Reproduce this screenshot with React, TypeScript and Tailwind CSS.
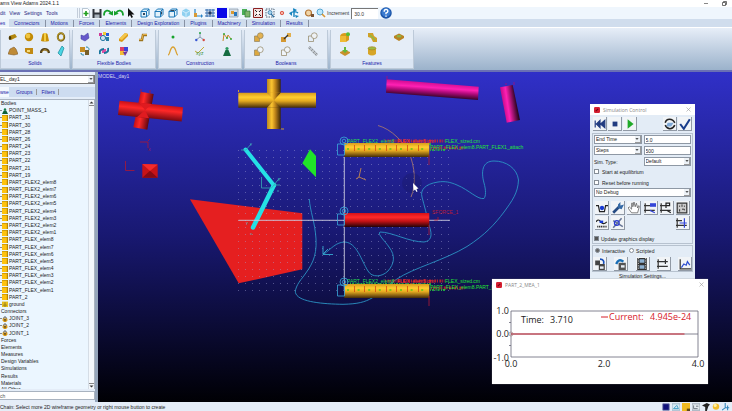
import type { ReactNode } from 'react'

type IconItem = { name: string; art: ReactNode }

function Art({ children, className = 'h-[10px] w-[10px]' }: { children: ReactNode; className?: string }) {
  return (
    <svg viewBox="0 0 10 10" className={className} fill="none" aria-hidden="true">
      {children}
    </svg>
  )
}

// Toolbar drawings
const cube = (front: string) => (
  <>
    <path d="M1 3.5 3.5 1H9v5.5L6.5 9H1z" fill="#e3f2fb" />
    <path d="M1 3.5h5.5V9H1zM1 3.5 3.5 1H9L6.5 3.5M9 1v5.5L6.5 9" stroke="#1d78b8" strokeWidth="1" />
    <path d={front} fill="#35495e" />
  </>
)

const fileTools: IconItem[] = [
  { name: 'New', art: <><path d="M1.5.5h5l2 2v7h-7z" fill="#fff" stroke="#8da3b5" strokeWidth=".6" /><path d="M5 3v5M2.500 5.500h5" stroke="#22a022" strokeWidth="1.700" /></> },
  { name: 'Save', art: <><path d="M.5 1h9v9h-9z" fill="#30353c" /><path d="M2.5 1h5v3.5h-5z" fill="#eef2f6" /><path d="M2.5 6.5h5V10h-5z" fill="#aab4bd" /></> },
  { name: 'Redo', art: <><path d="M1 7.5C1 1.5 6 1.5 8 5" stroke="#16a02c" strokeWidth="1.800" /><path d="M5.3 5.8 10 7.5V2.8z" fill="#16a02c" /></> },
  { name: 'Undo', art: <><path d="M9 7.5C9 1.5 4 1.5 2 5" stroke="#16a02c" strokeWidth="1.800" /><path d="M4.7 5.8 0 7.5V2.8z" fill="#16a02c" /></> },
]

const viewTools: IconItem[] = [
  { name: 'Front view', art: cube('M3 5h2v2H3z') },
  { name: 'Side view', art: cube('M7 4l1-1v3L7 7z') },
  { name: 'Top view', art: cube('M3 2h4L6 3H2z') },
]

const sceneTools: IconItem[] = [
  { name: 'Isometric view', art: <><path d="M5 .5 9 2.7v4.6L5 9.5 1 7.3V2.7z" fill="#8fd0f0" /><path d="M1 2.7 5 5l4-2.3M5 5v4.5" stroke="#e8f7ff" strokeWidth=".7" /></> },
  { name: 'Coordinate frame', art: <><path d="M2 1v7h7" stroke="#2a83c6" strokeWidth="1.2" /><path d="M1 5h3v4H1z" fill="#d89a35" /><path d="m8 6 2 2-2 2z" fill="#2a83c6" /></> },
  { name: 'Grid', art: <><path d="M0 2h10M0 5h10M0 8h10M2 1v8M5 1v8M8 1v8" stroke="#376eaf" strokeWidth="1" /><path d="M3.5 3.5h3v3h-3z" fill="#263f63" /></> },
  { name: 'Background', art: <path d="M0 0h10v10H0z" fill="#0808e8" /> },
  { name: 'Icons', art: <><path d="M0 1h9v8H0z" fill="#d5dfe8" stroke="#8191a1" strokeWidth=".7" /><path d="M2 3h3v3H2z" fill="#db9a31" /><path d="M5 4h3v4H5z" fill="#2878bd" /></> },
  { name: 'Shaded', art: <><path d="M1 1h5v6H1z" fill="#4caf58" /><path d="M4 3h5v6H4z" fill="#7fb66c" stroke="#31763b" strokeWidth=".7" /></> },
  { name: 'Fit', art: <><path d="M.5.5h9v9h-9z" fill="#f4dede" stroke="#8d2020" strokeWidth="1" /><path d="m2 2 6 6m0-6L2 8" stroke="#222" strokeWidth="1" /><path d="M4 4h2v2H4z" fill="#fff" /></> },
  { name: 'Zoom box', art: <><path d="M1 1h8v8H1z" stroke="#526477" strokeWidth="1" strokeDasharray="1.5 1" /><circle cx="5" cy="4.5" r="2" fill="#a6d4ee" stroke="#276b9d" strokeWidth=".7" /><path d="m6 6 3 3" stroke="#276b9d" strokeWidth="1.2" /></> },
  { name: 'Center', art: <circle cx="5" cy="5" r="1.7" fill="#f5b1a5" stroke="#d84d3c" strokeWidth=".9" /> },
  { name: 'Rotate', art: <><path d="M5 1v8M1 6c2-3 6-3 8-1" stroke="#1683bd" strokeWidth="1.4" /><path d="m4 0 4 2-3 2zM0 5l3-1v4zM6 7l4 1-3 2z" fill="#1683bd" /></> },
]

const endTools: IconItem[] = [
  { name: 'Rotate tool', art: <><circle cx="4.5" cy="5" r="3" fill="#f1d5a8" stroke="#b57736" strokeWidth="1.2" /><path d="M7 6h3v3H7z" fill="#795131" /></> },
  { name: 'Zoom', art: <><circle cx="4" cy="4" r="3" fill="#bce6fb" stroke="#4c9fcc" strokeWidth=".9" /><path d="m6 6 3 3" stroke="#d99632" strokeWidth="1.6" /></> },
]

// Ribbon drawings
const gears = <><circle cx="4" cy="6" r="2.6" fill="#cce1ef" stroke="#23749f" strokeWidth="1" /><path d="M4 0h3v3H4z" fill="#f3cb37" /><path d="M7 1h3v3H7z" fill="#2859da" /><path d="M0 1h3v3H0z" fill="#d13a98" /><path d="M7 5h3v4H7z" fill="#277da4" /></>
const boolean = (a: string, b: string) => <><path d="M.5 4h5v5.5h-5z" fill={a} stroke="#8f8260" strokeWidth=".7" /><circle cx="6.3" cy="3.7" r="2.9" fill={b} stroke="#8f8260" strokeWidth=".7" /></>

const ribbon: { title: string; className: string; grid: string; icons: IconItem[] }[] = [
  {
    title: 'Solids',
    className: 'w-[70px]',
    grid: 'grid-cols-4 pl-1',
    icons: [
      { name: 'Cylinder', art: <><path d="m1 4 6-2 2 3-6 3z" fill="#b1860d" /><ellipse cx="2" cy="6" rx="1.3" ry="2" fill="#4c3904" /></> },
      { name: 'Sphere', art: <><circle cx="5" cy="5" r="4.2" fill="#c28b06" /><circle cx="4" cy="4" r="2.4" fill="#efc440" /></> },
      { name: 'Frustum', art: <><path d="M1 9 2.5 2Q5 0 7.5 2L9 9Q5 10 1 9" fill="#c89008" /><path d="M4 1h2v8H4z" fill="#f4ce43" /></> },
      { name: 'Torus', art: <><ellipse cx="5" cy="5" rx="3.2" ry="3.7" stroke="#776116" strokeWidth="2" /><ellipse cx="4.6" cy="4.6" rx="3.2" ry="3.7" stroke="#d8b331" strokeWidth=".7" /></> },
      { name: 'Extrusion', art: <path d="m0 8 2-5 4-2 2 2 2 5-4 1z" fill="#bf8b37" stroke="#775120" strokeWidth=".5" /> },
      { name: 'Revolution', art: <><path d="M1 2h8v6H5L1 6z" fill="#c18a14" /><path d="M3 4h3v2H3z" fill="#f5dc7b" /></> },
      { name: 'Arc', art: <><path d="M1 7C1 2 8 2 9 7" stroke="#51401b" strokeWidth="2.3" /><path d="M2 6c1-3 5-3 6 0" stroke="#d7a225" strokeWidth=".8" /></> },
      { name: 'Plane', art: <path d="m6 0 2 2-3 8-3-3z" fill="#4bd6e4" stroke="#178798" strokeWidth=".7" /> },
    ],
  },
  {
    title: 'Flexible Bodies',
    className: 'w-[84px]',
    grid: 'grid-cols-4 px-[2px]',
    icons: [
      { name: 'Adams Flex', art: <path d="M1 3 4 4l4-3 1 5-4 3-4-2z" fill="#6658cb" stroke="#3b389a" strokeWidth=".5" /> },
      { name: 'Rigid to flex', art: gears },
      { name: 'Discrete link', art: <><path d="m0 7 6-6 3 1v2L3 10 0 9z" fill="#d99712" /><path d="m0 7 6-6 3 1-6 6z" fill="#f4c64a" /></> },
      { name: 'FE part', art: <><path d="M1 8h3l1-5h4" stroke="#9d741b" strokeWidth="2.5" /><path d="M1 7.5h3l1-5h4" stroke="#e4b04d" strokeWidth="1" /></> },
      { name: 'Flex to rigid', art: <><path d="M0 1h5v5H0z" fill="#c58d24" /><path d="M5 4h4v5H5z" fill="#765f2a" /><path d="M6 1c3 0 3 2 3 3M1 7c0 2 2 2 3 2" stroke="#187f9b" /></> },
      { name: 'Flex swap', art: <><path d="M3 3h4v4H3z" fill="#dd50a4" /><path d="M1 8c-1-3 1-5 4-5M9 2c1 3-1 5-4 5" stroke="#1a759c" strokeWidth="2" /></> },
      { name: 'ViewFlex', art: <><path d="M1 1h4v4H1z" fill="#da3f68" /><path d="M5 1h4v4H5z" fill="#3944d9" /><path d="M1 5h4v4H1z" fill="#f2bd36" /><path d="m4 6 5-1-3 5z" fill="#70359b" /></> },
    ],
  },
  {
    title: 'Construction',
    className: 'w-[84px]',
    grid: 'grid-cols-3 px-[1px]',
    icons: [
      { name: 'Point', art: <circle cx="5" cy="5" r="1.5" fill="#18a32e" /> },
      { name: 'Marker', art: <><path d="M5 1v4L1 8m4-3 4 3" stroke="#7188a3" strokeWidth=".8" /><circle cx="5" cy="1" r="1" fill="#24a444" /><circle cx="1.3" cy="8" r="1.2" fill="#3957d3" /><circle cx="8.7" cy="8" r="1.2" fill="#d34a42" /></> },
      { name: 'Polyline', art: <><path d="m1 9 1-7 3 4 1-3 3 4" stroke="#c98927" /><circle cx="2" cy="2" r="1" fill="#35a938" /><circle cx="5" cy="6" r="1" fill="#35a938" /><circle cx="9" cy="7" r="1" fill="#35a938" /></> },
      { name: 'Spline', art: <path d="M0 9C2 9 2 1 5 1s3 8 5 8" stroke="#daa233" strokeWidth="1.3" /> },
      { name: 'Equation', art: <><path d="m0 5 3 2 6-6" stroke="#c1ac37" /><text x="1" y="9" fontSize="5" fill="#389144">xyz</text></> },
      { name: 'Point mass', art: <><path d="M3.500 4h3L9 10H1z" fill="#176c41" /><circle cx="5" cy="2.500" r="1.600" fill="#2d9a61" /></> },
    ],
  },
  {
    title: 'Booleans',
    className: 'w-[84px]',
    grid: 'grid-cols-3 px-[1px]',
    icons: [
      { name: 'Union', art: boolean('#dda83f', '#e3b252') },
      { name: 'Merge', art: <><path d="M0 5h5v5H0z" fill="#d49832" /><path d="M6 1h4v4H6z" fill="#e2af4d" /><path d="m3 7 4-4" stroke="#333" strokeWidth="1.3" /></> },
      { name: 'Intersect', art: boolean('none', '#eef1f4') },
      { name: 'Cut', art: boolean('#dda83f', '#eff4fa') },
      { name: 'Split', art: boolean('#eff4fa', '#eff4fa') },
      { name: 'Chain', art: <><path d="m1 1 8 8" stroke="#8f9499" strokeWidth="2.5" strokeDasharray="2.5 .5" /><path d="m1 1 8 8" stroke="#d8dcdf" strokeWidth=".7" /></> },
    ],
  },
  {
    title: 'Features',
    className: 'w-[84px]',
    grid: 'grid-cols-3 px-[1px]',
    icons: [
      { name: 'Fillet', art: <><path d="M0 4Q1 1 5 1l4 1v6l-3 2H0z" fill="#d99c1b" /><path d="M0 4h6v6H0z" fill="#efbb36" /><circle cx="8" cy="2.3" r="2" fill="#59bd37" /></> },
      { name: 'Chamfer', art: <><path d="M1 1h5l1 3 3 2v4H6L4 6 1 5z" fill="#d0a128" /><path d="m3 3 5 5" stroke="#8fba45" strokeWidth="1.5" /></> },
      { name: 'Hole', art: <><path d="m0 4 5-2.5L10 4v2L5 9 0 6z" fill="#b98321" /><ellipse cx="5" cy="4.3" rx="2.5" ry="1.3" fill="#8cb448" /></> },
      { name: 'Boss', art: <><path d="m0 6 5-2 5 2v1L5 10 0 7z" fill="#c8912b" /><path d="M4 1h2v3h2L5 7 2 4h2z" fill="#64b83c" /></> },
      { name: 'Shell', art: <><path d="M1 2v6q4 3 8 0V2z" fill="#d7a527" /><ellipse cx="5" cy="2.3" rx="4" ry="1.6" fill="#9dbb42" stroke="#a77d1e" strokeWidth=".6" /></> },
    ],
  },
]

const menus = ['dit', 'View', 'Settings', 'Tools']
const ribbonTabs = ['Connectors', 'Motions', 'Forces', 'Elements', 'Design Exploration', 'Plugins', 'Machinery', 'Simulation', 'Results']

const elems = [8, 7, 6, 5, 4, 3, 2, 1]
const tree: { label: string; kind: 'group' | 'mass' | 'part' | 'ground' | 'joint' }[] = [
  { label: 'Bodies', kind: 'group' },
  { label: 'POINT_MASS_1', kind: 'mass' },
  ...[31, 30, 28, 26, 24, 23, 22, 21, 19].map((n) => ({ label: `PART_${n}`, kind: 'part' as const })),
  ...elems.map((n) => ({ label: `PART_FLEX2_elem${n}`, kind: 'part' as const })),
  ...elems.map((n) => ({ label: `PART_FLEX_elem${n}`, kind: 'part' as const })),
  { label: 'PART_2', kind: 'part' },
  { label: 'ground', kind: 'ground' },
  { label: 'Connectors', kind: 'group' },
  ...[3, 2, 1].map((n) => ({ label: `JOINT_${n}`, kind: 'joint' as const })),
  ...['Forces', 'Elements', 'Measures', 'Design Variables', 'Simulations', 'Results', 'Materials'].map((label) => ({ label, kind: 'group' as const })),
]

const treeArt = {
  group: null,
  mass: <><path d="M3 4h4l3 6H0z" fill="#0d6039" /><circle cx="5" cy="2.5" r="2" fill="#167c4b" /></>,
  part: <><path d="M0 0h10v10H0z" fill="#b78605" /><path d="M0 1h8v9H0z" fill="#ffc20e" /></>,
  ground: <><path d="M0 1h10v9H0z" fill="#e7be1c" /><path d="M5 2v5M2 7h6M4 9h2" stroke="#655c22" /></>,
  joint: <><path d="M3 5V2.5Q5 0 7 2.500V5" stroke="#474747" strokeWidth="1.600" /><path d="M1 4h8v3L7 10H3L1 7z" fill="#d99a14" /><path d="M4 5h2v3H4z" fill="#333" /></>,
}

function ToolButtons({ items, className }: { items: IconItem[]; className: string }) {
  return (
    <div className={`flex items-center ${className}`}>
      {items.map((item) => (
        <button key={item.name} aria-label={item.name} className="flex w-[11px] justify-center">
          <Art>{item.art}</Art>
        </button>
      ))}
    </div>
  )
}

function Header() {
  return (
    <header className="shrink-0">
      <div className="flex h-[7px] items-center justify-between bg-white leading-none text-[#222]">
        <span>ams View Adams 2024.1.1</span>
        <div className="flex items-center gap-[14px] pr-[5px]">
          <button aria-label="Minimize" className="h-px w-1 bg-[#888]" />
          <button aria-label="Restore" className="flex">
            <Art className="h-[5px] w-[5px]"><path d="M1 3h6v6H1zM3 3V1h6v6H7" stroke="#444" strokeWidth="1.5" /></Art>
          </button>
        </div>
      </div>

      <div className="flex h-3 items-center bg-[#eff6fd]">
        <nav className="flex w-[77px] gap-[4px] text-[#252480]">
          {menus.map((m) => <button key={m}>{m}</button>)}
        </nav>
        <div className="h-[10px] w-[3px] border-r border-l border-[#c3cdda]" />
        <ToolButtons items={fileTools} className="" />
        <button aria-label="Select" className="ml-px flex w-[11px] justify-center">
          <Art><path d="M2 0v9l2-2 1.5 3L7 9 5.5 6.500H8.500z" fill="#111" /></Art>
        </button>
        <ToolButtons items={viewTools} className="ml-[3px] gap-[3px]" />
        <ToolButtons items={sceneTools} className="ml-[2px] gap-px" />
        <ToolButtons items={endTools} className="ml-[4px] gap-px" />
        <label htmlFor="increment" className="ml-px text-[#333]">Increment</label>
        <input id="increment" defaultValue="30.0" className="ml-[2px] h-[11px] w-[27px] border-t border-l border-[#777] bg-white pl-[2px] text-[#333]" />
        <button aria-label="Help" className="ml-[2px] flex">
          <Art className="h-3 w-3">
            <circle cx="5" cy="5" r="4.8" fill="#1c55a8" />
            <circle cx="5" cy="4.5" r="3.7" fill="#3a7bd0" />
            <path d="M3.5 4Q3.500 2 5 2t1.500 1.700Q6.500 4.500 5 5v1M5 7v1.200" stroke="#fff" strokeWidth="1.2" />
          </Art>
        </button>
      </div>

      <nav className="flex h-2 items-center bg-[#d0dded] text-[#1a1aa8]">
        <button className="h-full w-[9px] bg-[#edf4fb] text-left">es</button>
        {ribbonTabs.map((tab) => (
          <button key={tab} className="h-[7px] border-r border-[#8791a3] px-[5px] whitespace-nowrap">{tab}</button>
        ))}
      </nav>

      <div className="flex h-[43px] gap-[2px] border-t border-white bg-linear-to-b from-[#e7eef8] to-[#9bb2cb] pt-[2px] pb-px">
        {ribbon.map((group) => (
          <section key={group.title} className={`flex shrink-0 flex-col border-r border-b border-l border-[#bdcad9] bg-[#e5edf7] ${group.className}`}>
            <div className={`grid h-[28px] grid-rows-2 items-center justify-items-center ${group.grid}`}>
              {group.icons.map((icon) => (
                <button key={icon.name} aria-label={icon.name}><Art>{icon.art}</Art></button>
              ))}
            </div>
            <h2 className="mt-px flex-1 bg-[#dbe6f4] text-center leading-[9px] text-[#1a1aa8]">{group.title}</h2>
          </section>
        ))}
      </div>
    </header>
  )
}

function DownArrow() {
  return (
    <span className="pointer-events-none absolute top-0 right-0 bottom-0 flex w-[6px] items-center justify-center border-r border-b border-[#999] bg-[#edf2f7]">
      <Art className="h-[4px] w-[4px]"><path d="m1 3 4 4 4-4z" fill="#222" /></Art>
    </span>
  )
}

function Browser() {
  return (
    <aside className="flex w-[98px] shrink-0 flex-col border-r-[3px] border-[#95a5ba] bg-[#e4edf8] pt-[3px] pb-[2px] text-[#222]">
      <div className="relative flex h-[9px] border border-l-0 border-[#777] bg-white">
        <select aria-label="Model" className="w-full appearance-none text-[5px] leading-none">
          <option>EL_day1</option>
        </select>
        <DownArrow />
      </div>
      <nav className="mt-[3px] flex h-[10px] items-center bg-[#cddcf0] text-[#1a1aa8]">
        <button className="h-full w-[9px] bg-[#f3f8fd] text-left">wse</button>
        <button className="border-r border-[#999] pr-[4px] pl-[7px]">Groups</button>
        <button className="border-r border-[#999] pr-[3px] pl-[4px]">Filters</button>
      </nav>
      <div className="mt-[2px] flex min-h-0 flex-1 border-t border-r border-[#aab4c0] bg-[#ebf6ff]">
        <ul className="flex min-w-0 flex-1 flex-col">
          {tree.map((node) => (
            <li key={node.label + node.kind} className="flex min-h-0 flex-1 items-center leading-none">
              {node.kind !== 'group' && (
                <>
                  <span className="h-px w-[2px] bg-[#888]" />
                  <Art className="mr-px h-[6px] w-[6px]">{treeArt[node.kind]}</Art>
                </>
              )}
              <span className={node.kind === 'group' ? 'pl-px' : ''}>{node.label}</span>
            </li>
          ))}
          <li className="h-[2px] overflow-hidden pl-px leading-[5px]">All Other</li>
        </ul>
        <div className="flex w-[6px] flex-col justify-between border-l border-[#d5dde6] bg-[#f4f8fc]">
          <button aria-label="Scroll up" className="border-b border-[#888]"><Art className="h-[5px] w-[5px]"><path d="m1 7 4-4 4 4z" fill="#333" /></Art></button>
          <button aria-label="Scroll down" className="border-t border-[#888]"><Art className="h-[5px] w-[5px]"><path d="m1 3 4 4 4-4z" fill="#333" /></Art></button>
        </div>
      </div>
      <input aria-label="Search" placeholder="ch" className="mt-[2px] h-[9px] w-full border border-l-0 border-[#a9b3c0] bg-white placeholder:text-[#555]" />
    </aside>
  )
}

// Names along a flexible beam; the dashed runs are the ones packed too tightly to read
function BeamNames({ y }: { y: number }) {
  return (
    <g fontSize="5">
      <path d={`M385 ${y - 2}h60M431 ${y + 5}h34`} stroke="#e02525" strokeWidth="3" strokeDasharray="1 1.400 2 .8" opacity=".75" />
      <path d={`M350 ${y + 1}h82M430 ${y + 7}h16`} stroke="#22c83a" strokeWidth="2" strokeDasharray="1 1 2 1.500" opacity=".8" />
      <text x="347" y={y} fill="#24d850">PART_FLEX2_elem8</text>
      <text x="397" y={y} fill="#f03030">FLEX_elem5.cm</text>
      <text x="445" y={y} fill="#22e336">FLEX_sized.cm</text>
      <text x="430" y={y + 6} fill="#22e336">PART_FLEX_elem8.PART_FLEX1_attach</text>
    </g>
  )
}

function JointMark({ y }: { y: number }) {
  return (
    <g stroke="#38a8dc" strokeWidth=".8" fill="none">
      <circle cx="344" cy={y - 2} r="4" />
      <circle cx="344" cy={y - 2} r="1.800" />
      <path d={`M337.5 ${y + 1}h7v11h-7z`} />
    </g>
  )
}

function Beam({ y, fill, flexible }: { y: number; fill: string; flexible?: boolean }) {
  return (
    <g>
      <path d={`M344.3 ${y}h85v14h-85z`} fill={fill} />
      {flexible && [354, 364, 375, 386, 396, 407, 418].map((x) => (
        <path key={x} d={`M${x}.5 ${y + 2}v6`} stroke="#d54a12" strokeWidth=".8" />
      ))}
      {flexible && <path d={`M347 ${y + 6}h80`} stroke="#7dc51b" strokeWidth="2" strokeDasharray="2 8.600" />}
      <path d={`M429 ${y + 12}v10`} stroke="#b61a35" strokeWidth=".8" />
    </g>
  )
}

function Scene() {
  return (
    <svg viewBox="98 72 634 330" preserveAspectRatio="xMinYMin slice" className="block h-full w-full" fontFamily="Liberation Sans, sans-serif">
      <defs>
        <linearGradient id="sky" x2="0" y2="1"><stop stopColor="#3030c8" /><stop offset=".5" stopColor="#181870" /><stop offset="1" stopColor="#000004" /></linearGradient>
        <linearGradient id="goldY" x2="0" y2="1"><stop stopColor="#d69a1c" /><stop offset=".3" stopColor="#ffce30" /><stop offset=".55" stopColor="#e5aa20" /><stop offset="1" stopColor="#442b08" /></linearGradient>
        <linearGradient id="goldX"><stop stopColor="#b98620" /><stop offset=".35" stopColor="#fcc530" /><stop offset=".6" stopColor="#c0851a" /><stop offset="1" stopColor="#382408" /></linearGradient>
        <linearGradient id="redY" x2="0" y2="1"><stop stopColor="#d51018" /><stop offset=".3" stopColor="#ff2a2a" /><stop offset=".6" stopColor="#c01115" /><stop offset="1" stopColor="#210308" /></linearGradient>
        <linearGradient id="redLong" gradientUnits="userSpaceOnUse" x1="151" y1="104" x2="149.5" y2="119"><stop stopColor="#c81118" /><stop offset=".35" stopColor="#ff2828" /><stop offset="1" stopColor="#6e0710" /></linearGradient>
        <linearGradient id="redShort" gradientUnits="userSpaceOnUse" x1="137" y1="110" x2="150.5" y2="112.5"><stop stopColor="#c81118" /><stop offset=".35" stopColor="#ff2828" /><stop offset="1" stopColor="#5e0710" /></linearGradient>
        <linearGradient id="pinkLong" gradientUnits="userSpaceOnUse" x1="433" y1="82.5" x2="432" y2="97"><stop stopColor="#d10c91" /><stop offset=".35" stopColor="#ff20b4" /><stop offset=".6" stopColor="#b30b7d" /><stop offset="1" stopColor="#320424" /></linearGradient>
        <linearGradient id="pinkShort" gradientUnits="userSpaceOnUse" x1="503" y1="105" x2="516.5" y2="103"><stop stopColor="#c70c8a" /><stop offset=".35" stopColor="#ff20b4" /><stop offset="1" stopColor="#2b041f" /></linearGradient>
        <pattern id="dots" x="238" y="150" width="7" height="7" patternUnits="userSpaceOnUse"><path d="M0 0h1v1H0z" fill="#a4a4d6" opacity=".45" /></pattern>
      </defs>
      <path d="M98 72h634v330H98z" fill="url(#sky)" />
      <text x="98" y="78" fontSize="5" fill="#d8d8ef">MODEL_day1</text>

      <path d="m190 199.3 112.3 14v56l-63.6 14z" fill="#e51f20" />
      <path d="M238 150h214v142H238z" fill="url(#dots)" />

      {/* cross shaped bodies */}
      <path d="m140.7 91.7 13 2.3-6.4 35.700-14-2.400z" fill="url(#redShort)" />
      <path d="m119.5 100.7 63.5 6.600-1.300 14.200-63.700-6.500z" fill="url(#redLong)" />
      <path d="m139.4 102.8 5.700 7.500 6.700-6.200M137 117l8-6.700 4 8" fill="#df1b20" />
      <path d="M267 79h13.7v50H267z" fill="url(#goldX)" />
      <path d="M238.3 92.7H316v15h-77.700z" fill="url(#goldY)" />
      <path d="M267 92.7h13.700l-6.700 7.500zM267 107.700l7-7.500 6.700 7.500z" fill="url(#goldX)" />
      <path d="M238.5 92v-2M281 129h3" stroke="#cf9c2d" />
      <path d="m142.3 164 15.400.5v13.200h-15.400z" fill="#c71318" />
      <path d="m142.3 164 7.700 7 7.700-6.500z" fill="#f42b2b" />
      <path d="m142.3 177.700 7.700-7 7.700 7z" fill="#870a14" />
      <path d="M125.5 161v9.500h9M140 142h8v6M148 141l2-2M141 89v3M150 90v3" stroke="#ad1733" fill="none" strokeWidth=".8" />
      <text x="148" y="151" fontSize="4" fill="#ad1733">X</text>

      {/* links and plates */}
      <path d="m245.5 149.5 28.500 36" stroke="#25e0e5" strokeWidth="4" strokeLinecap="round" />
      <path d="m274 185-21 42.500" stroke="#25e0e5" strokeWidth="4.5" strokeLinecap="round" />
      <path d="M241 150h5l5-6M261.5 177v11h10l8-10M274 185h6" stroke="#36a9b5" fill="none" strokeWidth=".8" />
      <g fontSize="4" fill="#4bb8c0"><text x="250" y="145">y</text><text x="278" y="180">y</text><text x="277" y="192">x</text><text x="246" y="224">y</text><text x="250" y="235">x</text></g>
      <path d="m310 149.3 6 6.700v21.300l-13.700-14z" fill="#20e329" />

      {/* curves */}
      <g fill="none" strokeWidth=".9">
        <path d="M309.3 199C310 211 315 222 316 239C317 258 311 266 303 277C297 284 294 291 296 294C300 302 323 304 343 304.3C358 304 365 302 372 298C384 291 387 285 397 279C413 268 445 260 467 246.5C485 235 495 224 504 212C512 201 518 193 518.5 180C517 168 506 161 494 161C482 161 481 172 484 183C486 190 486 196 484 198.5C478 200 469 190 457 185C450 182 445 181 438 182C425 184 420 190 422 197C424 205 427 215 429 225C433 236 431 241 424 242C409 242 392 232 380 232C377 234 385 241 389 247C396 256 394 264 388 271C382 277 372 278 368 271C361 260 357 243 345 242C336 242 331 249 324 254" stroke="#2b93c4" />
        <path d="M323 246v8.500h10M323 254l5-5" stroke="#36a9d2" />
        <path d="M378 125.5C391 129 405 142 411 158C416 174 415 187 411 197" stroke="#a07472" />
        <path d="m361 168-2 9 7 3M359 177l-3 2" stroke="#c4874d" />
      </g>

      <circle cx="412" cy="183" r="10" fill="#17175e" opacity=".3" />
      <path d="M344.3 157v133M238.5 220.3H450" stroke="#ccccdf" strokeWidth=".9" />

      <path d="M386.7 79.3 478.7 86.7 478 100 386 92.7z" fill="url(#pinkLong)" />
      <path d="m500 87.3 12.7-2.300 7.300 35-13.300 2.700z" fill="url(#pinkShort)" />
      <path d="M387 76v4M506 83v2M514 82v3" stroke="#a80d7c" strokeWidth=".8" />

      <BeamNames y={143} />
      <Beam y={143} fill="url(#goldY)" flexible />
      <JointMark y={143} />
      <Beam y={213} fill="url(#redY)" />
      <JointMark y={213} />
      <text x="432" y="214" fontSize="5" fill="#b61a35">SFORCE_1</text>
      <path d="M434 220h4v-3" stroke="#b61a35" fill="none" strokeWidth=".8" />
      <BeamNames y={283} />
      <Beam y={284} fill="url(#goldY)" flexible />
      <JointMark y={284} />
      <path d="m413 183 .5 8 1.500-1.500 1.500 2.500 1-.5-1-2.500 2-.5z" fill="#fff" />
    </svg>
  )
}

const driveButtons: IconItem[] = [
  { name: 'Reset', art: <><path d="M1 2v6M5 2v6L2 5zM9 2v6L5.500 5z" fill="#223c80" stroke="#223c80" /></> },
  { name: 'Stop', art: <path d="M3 3h4v4H3z" fill="#223c80" /> },
  { name: 'Run', art: <path d="m3 1 5 4-5 4z" fill="#20aa28" /> },
]
const checkButtons: IconItem[] = [
  { name: 'Static equilibrium', art: <><path d="M1 4c1-4 6-4 8 0M9 6c-2 4-6 4-8 0" stroke="#222" strokeWidth="1.3" /><path d="M3 4h5L6 7H2z" fill="#80a9d5" /></> },
  { name: 'Verify', art: <path d="m1 5 3 4 5-8" stroke="#193d8b" strokeWidth="1.7" /> },
]
const axes = <path d="M1 1v8M0 3h5M0 7h9" stroke="#333" strokeWidth="1" />
const modelButtons: IconItem[] = [
  { name: 'Equilibrium', art: <><path d="M0 3h2l1 5h4l1-5h2" stroke="#222" /><circle cx="5" cy="5" r="1.8" fill="#1639d3" /></> },
  { name: 'Settings', art: <><path d="m1 9 5-5" stroke="#254b83" strokeWidth="2.2" /><path d="M5 5V2l2-2v3l3-1-2 4z" fill="#3469a5" /></> },
  { name: 'Pan', art: <path d="M3 9 0 5l1-1 2 2V1h1v3l1-4 1 4 1-3 1 4 1-2 .5.5L8 9z" fill="#fff" stroke="#555" strokeWidth=".6" /> },
  { name: 'Linear', art: <>{axes}<path d="M5 1h5v3H5z" fill="#3546d8" /><path d="M5 7l4 2" stroke="#3546d8" /></> },
  { name: 'Plot', art: <>{axes}<path d="M5 5V1h3v2H5M6 7l3 2" stroke="#222" /></> },
  { name: 'Matrix', art: <><path d="M1 1h8v8H1z" fill="#ccc" stroke="#333" /><path d="M3 3v1M5 2v2M7 3v1M3 6v2M5 6h2v1" stroke="#333" strokeWidth=".8" /></> },
  { name: 'Modes', art: <><path d="M0 4q2-3 4 0t5 0" stroke="#222" /><path d="M3 3h3v2H3z" fill="#1639d3" /><path d="M1 8h8" stroke="#333" strokeWidth="1.5" strokeDasharray="1 .5" /></> },
  { name: 'Vibration', art: <><path d="m1 9 7-8M1 3l8 5" stroke="#687797" strokeWidth="1.3" /><circle cx="4" cy="5" r="2" stroke="#293bd3" /></> },
]
const traceButton: IconItem = { name: 'Trace', art: <>{axes}<path d="M3 5h6M7 1v8" stroke="#3546d8" /></> }
const postButtons: IconItem[] = [
  { name: 'Save simulation', art: <><path d="M1 2h4v4H1zM4 5h5v5H4z" fill="#444" /><path d="M5 1q4 0 3 4" stroke="#174fba" strokeWidth="1.4" /><path d="M5 7h3v2H5z" fill="#e7eef5" /></> },
  { name: 'Reload simulation', art: <><path d="M3 4h6v6H3z" fill="#555" /><path d="M1 5q2-5 6-2" stroke="#196eb6" strokeWidth="2" /><path d="M5 6h3v2H5z" fill="#e7eef5" /></> },
  { name: 'Animation', art: <><path d="M1 0h8v10H1z" fill="#333" /><path d="M3 1h4v3H3zM3 6h4v3H3z" fill="#8db1d2" /><path d="M2 0v10M8 0v10" stroke="#ddd" strokeWidth=".7" strokeDasharray="1 1" /></> },
  { name: 'Results', art: <>{axes}<path d="M5 3h4M7 1v4" stroke="#333" /></> },
  { name: 'Graph', art: <><path d="M1 1v8h9" stroke="#333" /><path d="m2 8 2-3 2 1 1-3 2 3" stroke="#294bd1" /></> },
]

function RaisedButton({ item }: { item: IconItem }) {
  return (
    <button aria-label={item.name} className="flex h-[14px] w-[14px] items-center justify-center border-r border-b border-[#9099a5] bg-[#f1f4f7]">
      <Art className="h-3 w-3">{item.art}</Art>
    </button>
  )
}

function Choice({ label, value }: { label: string; value: string }) {
  return (
    <div className="relative flex h-[9px] border border-[#8e98a4] bg-white">
      <select aria-label={label} className="w-full appearance-none pl-px text-[5px] leading-none">
        <option>{value}</option>
      </select>
      <DownArrow />
    </div>
  )
}

function WindowTitle({ title }: { title: string }) {
  return (
    <div className="flex h-[11px] items-center gap-[3px] bg-white px-[4px] font-['Open_Sans',sans-serif] text-[#888]">
      <Art className="h-[6px] w-[6px]"><rect width="10" height="10" rx="2" fill="#d51f31" /><path d="m3 7 4-4" stroke="#701" strokeWidth="2" /></Art>
      <h2 className="flex-1">{title}</h2>
      <button aria-label="Close" className="flex"><Art className="h-[5px] w-[5px]"><path d="m1 1 8 8m0-8L1 9" stroke="#999" strokeWidth="1.2" /></Art></button>
    </div>
  )
}

const tick = 'h-[5px] w-[5px] appearance-none border border-[#858d96] bg-white'

function SimulationControl() {
  return (
    <section className="absolute top-[32px] right-[37px] w-[105px] bg-[#e3ecf6] text-[#222]">
      <WindowTitle title="Simulation Control" />
      <div className="flex gap-px px-[3px] pt-[2px] pb-[2px]">
        {driveButtons.map((b) => <RaisedButton key={b.name} item={b} />)}
        <div className="flex-1" />
        {checkButtons.map((b) => <RaisedButton key={b.name} item={b} />)}
      </div>
      <div className="mx-[2px] border border-[#b7c2cf] px-px">
        <div className="grid grid-cols-2 items-center gap-[2px] pt-px">
          <Choice label="End mode" value="End Time" />
          <input aria-label="End time" defaultValue="5.0" className="h-[9px] w-full border border-[#8e98a4] bg-white pl-px" />
          <Choice label="Step mode" value="Steps" />
          <input aria-label="Step count" defaultValue="500" className="h-[9px] w-full border border-[#8e98a4] bg-white pl-px" />
          <span>Sim. Type:</span>
          <Choice label="Sim. Type" value="Default" />
        </div>
        <label className="flex h-[11px] items-center gap-[3px]"><input type="checkbox" className={tick} />Start at equilibrium</label>
        <label className="flex h-[11px] items-center gap-[3px]"><input type="checkbox" className={tick} />Reset before running</label>
        <Choice label="Debug" value="No Debug" />
        <div className="grid grid-cols-6 justify-items-center gap-y-px pt-[4px] pb-[4px]">
          {modelButtons.map((b) => <RaisedButton key={b.name} item={b} />)}
          <div className="col-start-6">
            <RaisedButton item={traceButton} />
          </div>
        </div>
        <label className="flex h-[9px] items-center gap-[2px]">
          <input type="checkbox" defaultChecked className={`${tick} checked:bg-[#555]`} />Update graphics display
        </label>
      </div>
      <div className="mx-[2px] mt-px border border-[#b7c2cf]">
        <div className="flex h-[9px] items-center gap-[4px] px-[2px]">
          <label className="flex items-center gap-[2px]"><input type="radio" name="mode" defaultChecked className={`${tick} rounded-full checked:bg-[#666]`} />Interactive</label>
          <label className="flex items-center gap-[2px]"><input type="radio" name="mode" className={`${tick} rounded-full`} />Scripted</label>
        </div>
        <div className="flex justify-between pt-[2px]">
          {postButtons.map((b) => <RaisedButton key={b.name} item={b} />)}
        </div>
      </div>
      <button className="block w-full pt-px pb-[10px] text-center">Simulation Settings...</button>
    </section>
  )
}

function MeasurePlot() {
  return (
    <section className="absolute right-[24px] bottom-[18px] w-[216px] bg-white shadow-[0_0_1px_#777]">
      <WindowTitle title="PART_2_MEA_1" />
      <svg viewBox="491 290 216 94" className="block w-full" fontFamily="Open Sans, sans-serif" fontSize="9" fill="#222">
        <path d="M510 311h187v46H510zM510 334h187M508 322.5h2M508 345.5h2" fill="none" stroke="#667" strokeWidth=".8" />
        <path d="M510 334h173.5" stroke="#cf2937" />
        <circle cx="510" cy="334" r="2" fill="none" stroke="#977" strokeWidth=".6" />
        <g textAnchor="end"><text x="508" y="314">1.0</text><text x="508" y="337">0.0</text><text x="508" y="361">-1.0</text></g>
        <g textAnchor="middle"><text x="510" y="367">0.0</text><text x="603" y="367">2.0</text><text x="697" y="367">4.0</text></g>
        <text x="520" y="323">Time:</text>
        <text x="549" y="323">3.710</text>
        <g fill="#d6202b"><path d="M600 317h7" stroke="#d6202b" /><text x="608" y="320">Current:</text><text x="649" y="320">4.945e-24</text></g>
      </svg>
    </section>
  )
}

const statusTools: IconItem[] = [
  { name: 'Background color', art: <path d="M1 1h8v8H1z" fill="#10107a" stroke="#6570a5" /> },
  { name: 'Wireframe', art: <><path d="M0 1h10v8H0z" fill="#d7eaf5" stroke="#8ba8bb" /><path d="m2 7 4-4 2 4z" stroke="#218fbe" /></> },
  { name: 'Solid', art: <><path d="M0 0h10v10H0z" fill="#efba22" /><path d="M6 7h4v3H6z" fill="#604c18" /></> },
  { name: 'Grid snap', art: <><path d="M0 1h10v8H0z" fill="#e1e9ef" stroke="#8794a1" /><path d="M2 3v4h5M5 4h3" stroke="#55606c" /></> },
  { name: 'View camera', art: <path d="m0 3 6-3 4 2-2 2-2 6H4V5z" fill="#222" /> },
  { name: 'Lighting', art: <><circle cx="5" cy="4.5" r="4" fill="#f0bd2c" /><circle cx="4" cy="3" r="2" fill="#fff0a0" /></> },
  { name: 'Triad', art: <path d="M4 0v6L0 9m4-3h5M7 3v6" stroke="#3185bb" strokeWidth="1.3" /> },
]

export default function App() {
  return (
    <div className="flex h-screen flex-col overflow-hidden bg-[#e5edf7] font-['Liberation_Sans',sans-serif] text-[5px] leading-[6px]">
      <Header />
      <div className="flex min-h-0 flex-1 border-t-2 border-[#6a70b4]">
        <Browser />
        <main className="relative min-w-0 flex-1 overflow-hidden bg-black">
          <Scene />
          <SimulationControl />
          <MeasurePlot />
        </main>
      </div>
      <footer className="flex h-[9px] shrink-0 items-center justify-between bg-[#e5edf7] text-[#222]">
        <span>Chain: Select more 2D wireframe geometry or right mouse button to create</span>
        <div className="flex gap-[2px] pr-[2px]">
          {statusTools.map((t) => (
            <button key={t.name} aria-label={t.name}><Art className="h-[8px] w-[8px]">{t.art}</Art></button>
          ))}
        </div>
      </footer>
    </div>
  )
}
